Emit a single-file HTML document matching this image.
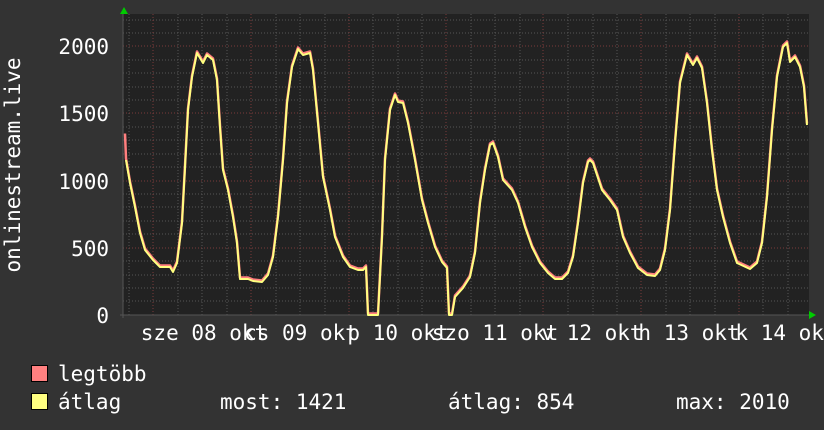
<!DOCTYPE html>
<html><head><meta charset="utf-8"><style>
html,body{margin:0;padding:0;background:#333;}
svg{display:block;font-family:"DejaVu Sans Mono","Liberation Mono",monospace;}
</style></head><body>
<svg width="824" height="430" viewBox="0 0 824 430" xmlns="http://www.w3.org/2000/svg">
<rect width="824" height="430" fill="#333"/>
<rect x="123" y="14" width="686" height="301" fill="#222"/>
<g stroke="#555" stroke-width="1" stroke-dasharray="1,2">
<path d="M129 14V315M178 14V315M202 14V315M227 14V315M276 14V315M300 14V315M325 14V315M373 14V315M398 14V315M422 14V315M471 14V315M495 14V315M520 14V315M568 14V315M593 14V315M617 14V315M666 14V315M690 14V315M715 14V315M763 14V315M788 14V315"/>
<path d="M123 20H809M123 33H809M123 60H809M123 73H809M123 87H809M123 100H809M123 127H809M123 140H809M123 154H809M123 167H809M123 194H809M123 207H809M123 221H809M123 234H809M123 261H809M123 275H809M123 288H809M123 301H809"/>
</g>
<g stroke="#7a3a3a" stroke-width="1" stroke-dasharray="1,2">
<path d="M153 14V315M251 14V315M349 14V315M446 14V315M543 14V315M641 14V315M739 14V315"/>
<path d="M123 46H809M123 113H809M123 181H809M123 248H809"/>
</g>
<path d="M123 14V318M120 315H809" stroke="#555" stroke-width="1"/>
<polygon points="120,14 128,14 124,7" fill="#0c0"/>
<polygon points="809,311 809,319 816,315" fill="#0c0"/>
<g fill="none" stroke-width="2" stroke-linejoin="round">
<polyline stroke="#ff7f7f" stroke-width="2.5" transform="translate(0,-1.5)" points="125,135 126,160 130,183 135,207 140,233 145,250 153,260 160,267 170,267 173,272 177,263 182,223 185,167 188,110 192,77 197,53 203,63 207,55 213,60 217,80 220,127 223,170 228,190 233,217 237,243 240,279 248,279 253,281 262,282 268,275 273,257 278,217 283,160 287,103 292,67 298,49 303,55 310,53 313,70 318,123 323,177 330,210 335,237 343,257 350,267 358,270 363,270 366,267 368,315 378,315 382,237 385,160 390,110 395,95 398,102 403,103 408,123 415,160 422,200 428,223 435,247 442,262 447,268 449,315 452,315 455,297 463,288 470,277 475,253 480,203 485,170 490,145 493,143 498,157 503,180 512,190 518,203 525,227 532,247 540,263 548,273 555,279 562,279 568,273 573,257 578,223 583,183 588,162 590,160 593,163 602,190 610,200 617,210 623,237 630,253 638,268 647,275 655,276 660,270 665,250 670,210 675,143 680,83 687,55 693,65 697,58 702,68 707,103 712,150 717,190 723,217 730,243 737,263 750,269 757,263 762,243 767,197 772,130 777,77 783,47 787,43 790,62 795,57 800,67 804,87 807,125"/>
<polyline stroke="#ffff80" points="126,160 130,183 135,207 140,233 145,250 153,260 160,267 170,267 173,272 177,263 182,223 185,167 188,110 192,77 197,53 203,63 207,55 213,60 217,80 220,127 223,170 228,190 233,217 237,243 240,279 248,279 253,281 262,282 268,275 273,257 278,217 283,160 287,103 292,67 298,49 303,55 310,53 313,70 318,123 323,177 330,210 335,237 343,257 350,267 358,270 363,270 366,267 368,315 378,315 382,237 385,160 390,110 395,95 398,102 403,103 408,123 415,160 422,200 428,223 435,247 442,262 447,268 449,315 452,315 455,297 463,288 470,277 475,253 480,203 485,170 490,145 493,143 498,157 503,180 512,190 518,203 525,227 532,247 540,263 548,273 555,279 562,279 568,273 573,257 578,223 583,183 588,162 590,160 593,163 602,190 610,200 617,210 623,237 630,253 638,268 647,275 655,276 660,270 665,250 670,210 675,143 680,83 687,55 693,65 697,58 702,68 707,103 712,150 717,190 723,217 730,243 737,263 750,269 757,263 762,243 767,197 772,130 777,77 783,47 787,43 790,62 795,57 800,67 804,87 807,125"/>
</g>
<g fill="#fff" font-size="21">
<g text-anchor="end">
<text x="109" y="54">2000</text>
<text x="109" y="121">1500</text>
<text x="109" y="189">1000</text>
<text x="109" y="256">500</text>
<text x="109" y="323">0</text>
</g>
<text transform="translate(20,165) rotate(-90)" text-anchor="middle">onlinestream.live</text>
<g text-anchor="middle">
<text x="204" y="340">sze 08 okt</text>
<text x="301" y="340">cs 09 okt</text>
<text x="398" y="340">p 10 okt</text>
<text x="495" y="340">szo 11 okt</text>
<text x="592" y="340">v 12 okt</text>
<text x="689" y="340">h 13 okt</text>
<text x="786" y="340">k 14 okt</text>
</g>
<rect x="31.5" y="365.5" width="16" height="16" fill="#ff8080" stroke="#000"/>
<rect x="31.5" y="393.5" width="16" height="16" fill="#ffff80" stroke="#000"/>
<text x="58" y="381">legtöbb</text>
<text x="58" y="409">átlag</text>
<text x="220" y="409">most: 1421</text>
<text x="448" y="409">átlag: 854</text>
<text x="676" y="409">max: 2010</text>
</g>
</svg>
</body></html>
